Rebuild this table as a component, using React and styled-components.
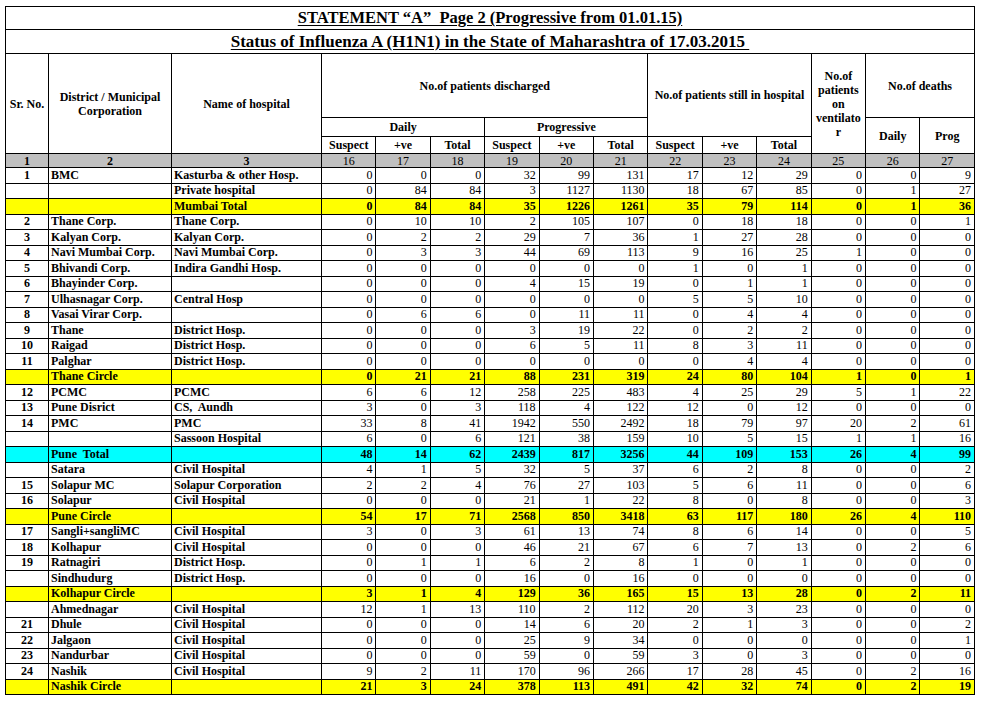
import React from 'react';
import styled, { createGlobalStyle, css } from 'styled-components';

// Statement "A" page 2 : H1N1 status table, laid out like the original sheet

const GlobalStyle = createGlobalStyle`
  html, body {
    margin: 0;
    background: #fff;
  }
  body {
    padding: 6px 0 0 5px;
    font-family: "Liberation Serif", "Times New Roman", serif;
    color: #000;
  }
`;

const Sheet = styled.table`
  width: 970px;
  border-collapse: collapse;
  table-layout: fixed;
  font-size: 12px;
  line-height: 13px;
`;

const SrCol = styled.col`
  width: 43px;
`;
const DistrictCol = styled.col`
  width: 123px;
`;
const HospitalCol = styled.col`
  width: 150px;
`;
const NumCol = styled.col``;

const TitleRow = styled.tr`
  height: ${(p) => p.$h}px;
`;

const TitleCell = styled.td`
  border: 1px solid #000;
  padding: 0;
  text-align: center;
  vertical-align: middle;
  font-size: ${(p) => p.$size}px;
  font-weight: bold;
  line-height: 18px;
  white-space: pre;
`;

const Underlined = styled.span`
  text-decoration: underline;
  text-underline-offset: 2px;
`;

const HeadRow = styled.tr`
  height: ${(p) => p.$h}px;
`;

const HeadCell = styled.th`
  border: 1px solid #000;
  padding: 0 1px;
  text-align: center;
  vertical-align: middle;
  font-weight: bold;
  line-height: 14px;
`;

const IndexRow = styled.tr`
  height: 14px;
  background: #c0c0c0;
`;

const IndexCell = styled.td`
  border: 1px solid #000;
  padding: 0;
  text-align: center;
  line-height: 12px;
  font-weight: ${(p) => (p.$bold ? 'bold' : 'normal')};
`;

const tones = {
  yellow: '#ffff00',
  cyan: '#00ffff',
};

const DataRow = styled.tr`
  height: 15.5px;
  background: ${(p) => tones[p.$tone] || '#fff'};
`;

const Cell = styled.td`
  border: 1px solid #000;
  padding: 0 2px;
  line-height: 13px;
  white-space: pre;
  overflow: hidden;
`;

const SrCell = styled(Cell)`
  text-align: center;
  font-weight: bold;
`;

const TextCell = styled(Cell)`
  text-align: left;
  font-weight: bold;
`;

const NumCell = styled(Cell)`
  text-align: right;
  padding-right: 3px;
  ${(p) =>
    p.$total &&
    css`
      font-weight: bold;
    `}
`;

const r = (sr, district, hospital, nums, tone) => ({ sr, district, hospital, nums, tone });

const rows = [
  r('1', 'BMC', 'Kasturba & other Hosp.', [0, 0, 0, 32, 99, 131, 17, 12, 29, 0, 0, 9]),
  r('', '', 'Private hospital', [0, 84, 84, 3, 1127, 1130, 18, 67, 85, 0, 1, 27]),
  r('', '', 'Mumbai Total', [0, 84, 84, 35, 1226, 1261, 35, 79, 114, 0, 1, 36], 'yellow'),
  r('2', 'Thane Corp.', 'Thane Corp.', [0, 10, 10, 2, 105, 107, 0, 18, 18, 0, 0, 1]),
  r('3', 'Kalyan Corp.', 'Kalyan Corp.', [0, 2, 2, 29, 7, 36, 1, 27, 28, 0, 0, 0]),
  r('4', 'Navi Mumbai Corp.', 'Navi Mumbai Corp.', [0, 3, 3, 44, 69, 113, 9, 16, 25, 1, 0, 0]),
  r('5', 'Bhivandi Corp.', 'Indira Gandhi Hosp.', [0, 0, 0, 0, 0, 0, 1, 0, 1, 0, 0, 0]),
  r('6', 'Bhayinder Corp.', '', [0, 0, 0, 4, 15, 19, 0, 1, 1, 0, 0, 0]),
  r('7', 'Ulhasnagar Corp.', 'Central Hosp', [0, 0, 0, 0, 0, 0, 5, 5, 10, 0, 0, 0]),
  r('8', 'Vasai Virar Corp.', '', [0, 6, 6, 0, 11, 11, 0, 4, 4, 0, 0, 0]),
  r('9', 'Thane', 'District Hosp.', [0, 0, 0, 3, 19, 22, 0, 2, 2, 0, 0, 0]),
  r('10', 'Raigad', 'District Hosp.', [0, 0, 0, 6, 5, 11, 8, 3, 11, 0, 0, 0]),
  r('11', 'Palghar', 'District Hosp.', [0, 0, 0, 0, 0, 0, 0, 4, 4, 0, 0, 0]),
  r('', 'Thane Circle', '', [0, 21, 21, 88, 231, 319, 24, 80, 104, 1, 0, 1], 'yellow'),
  r('12', 'PCMC', 'PCMC', [6, 6, 12, 258, 225, 483, 4, 25, 29, 5, 1, 22]),
  r('13', 'Pune Disrict', 'CS,  Aundh', [3, 0, 3, 118, 4, 122, 12, 0, 12, 0, 0, 0]),
  r('14', 'PMC', 'PMC', [33, 8, 41, 1942, 550, 2492, 18, 79, 97, 20, 2, 61]),
  r('', '', 'Sassoon Hospital', [6, 0, 6, 121, 38, 159, 10, 5, 15, 1, 1, 16]),
  r('', 'Pune  Total', '', [48, 14, 62, 2439, 817, 3256, 44, 109, 153, 26, 4, 99], 'cyan'),
  r('', 'Satara', 'Civil Hospital', [4, 1, 5, 32, 5, 37, 6, 2, 8, 0, 0, 2]),
  r('15', 'Solapur MC', 'Solapur Corporation', [2, 2, 4, 76, 27, 103, 5, 6, 11, 0, 0, 6]),
  r('16', 'Solapur', 'Civil Hospital', [0, 0, 0, 21, 1, 22, 8, 0, 8, 0, 0, 3]),
  r('', 'Pune Circle', '', [54, 17, 71, 2568, 850, 3418, 63, 117, 180, 26, 4, 110], 'yellow'),
  r('17', 'Sangli+sangliMC', 'Civil Hospital', [3, 0, 3, 61, 13, 74, 8, 6, 14, 0, 0, 5]),
  r('18', 'Kolhapur', 'Civil Hospital', [0, 0, 0, 46, 21, 67, 6, 7, 13, 0, 2, 6]),
  r('19', 'Ratnagiri', 'District Hosp.', [0, 1, 1, 6, 2, 8, 1, 0, 1, 0, 0, 0]),
  r('', 'Sindhudurg', 'District Hosp.', [0, 0, 0, 16, 0, 16, 0, 0, 0, 0, 0, 0]),
  r('', 'Kolhapur Circle', '', [3, 1, 4, 129, 36, 165, 15, 13, 28, 0, 2, 11], 'yellow'),
  r('', 'Ahmednagar', 'Civil Hospital', [12, 1, 13, 110, 2, 112, 20, 3, 23, 0, 0, 0]),
  r('21', 'Dhule', 'Civil Hospital', [0, 0, 0, 14, 6, 20, 2, 1, 3, 0, 0, 2]),
  r('22', 'Jalgaon', 'Civil Hospital', [0, 0, 0, 25, 9, 34, 0, 0, 0, 0, 0, 1]),
  r('23', 'Nandurbar', 'Civil Hospital', [0, 0, 0, 59, 0, 59, 3, 0, 3, 0, 0, 0]),
  r('24', 'Nashik', 'Civil Hospital', [9, 2, 11, 170, 96, 266, 17, 28, 45, 0, 2, 16]),
  r('', 'Nashik Circle', '', [21, 3, 24, 378, 113, 491, 42, 32, 74, 0, 2, 19], 'yellow'),
];

const indexNumbers = [16, 17, 18, 19, 20, 21, 22, 23, 24, 25, 26, 27];

export default function App() {
  return (
    <>
      <GlobalStyle />
      <Sheet>
        <colgroup>
          <SrCol />
          <DistrictCol />
          <HospitalCol />
          {indexNumbers.map((n) => (
            <NumCol key={n} />
          ))}
        </colgroup>
        <tbody>
          <TitleRow $h={23}>
            <TitleCell colSpan={15} $size={16.5}>
              <Underlined>STATEMENT “A”  Page 2 (Progressive from 01.01.15)</Underlined>
            </TitleCell>
          </TitleRow>
          <TitleRow $h={24}>
            <TitleCell colSpan={15} $size={17}>
              <Underlined>Status of Influenza A (H1N1) in the State of Maharashtra of 17.03.2015 </Underlined>
            </TitleCell>
          </TitleRow>

          <HeadRow $h={64}>
            <HeadCell rowSpan={3}>Sr. No.</HeadCell>
            <HeadCell rowSpan={3}>
              District / Municipal
              <br />
              Corporation
            </HeadCell>
            <HeadCell rowSpan={3}>Name of hospital</HeadCell>
            <HeadCell colSpan={6}>No.of patients discharged</HeadCell>
            <HeadCell colSpan={3} rowSpan={2}>
              No.of patients still in hospital
            </HeadCell>
            <HeadCell rowSpan={3}>
              No.of
              <br />
              patients
              <br />
              on
              <br />
              ventilato
              <br />r
            </HeadCell>
            <HeadCell colSpan={2}>No.of deaths</HeadCell>
          </HeadRow>
          <HeadRow $h={19}>
            <HeadCell colSpan={3}>Daily</HeadCell>
            <HeadCell colSpan={3}>Progressive</HeadCell>
            <HeadCell rowSpan={2}>Daily</HeadCell>
            <HeadCell rowSpan={2}>Prog</HeadCell>
          </HeadRow>
          <HeadRow $h={17}>
            <HeadCell>Suspect</HeadCell>
            <HeadCell>+ve</HeadCell>
            <HeadCell>Total</HeadCell>
            <HeadCell>Suspect</HeadCell>
            <HeadCell>+ve</HeadCell>
            <HeadCell>Total</HeadCell>
            <HeadCell>Suspect</HeadCell>
            <HeadCell>+ve</HeadCell>
            <HeadCell>Total</HeadCell>
          </HeadRow>

          <IndexRow>
            <IndexCell $bold>1</IndexCell>
            <IndexCell $bold>2</IndexCell>
            <IndexCell $bold>3</IndexCell>
            {indexNumbers.map((n) => (
              <IndexCell key={n}>{n}</IndexCell>
            ))}
          </IndexRow>

          {rows.map((row, i) => (
            <DataRow key={i} $tone={row.tone}>
              <SrCell>{row.sr}</SrCell>
              <TextCell>{row.district}</TextCell>
              <TextCell>{row.hospital}</TextCell>
              {row.nums.map((v, j) => (
                <NumCell key={j} $total={!!row.tone}>
                  {v}
                </NumCell>
              ))}
            </DataRow>
          ))}
        </tbody>
      </Sheet>
    </>
  );
}
